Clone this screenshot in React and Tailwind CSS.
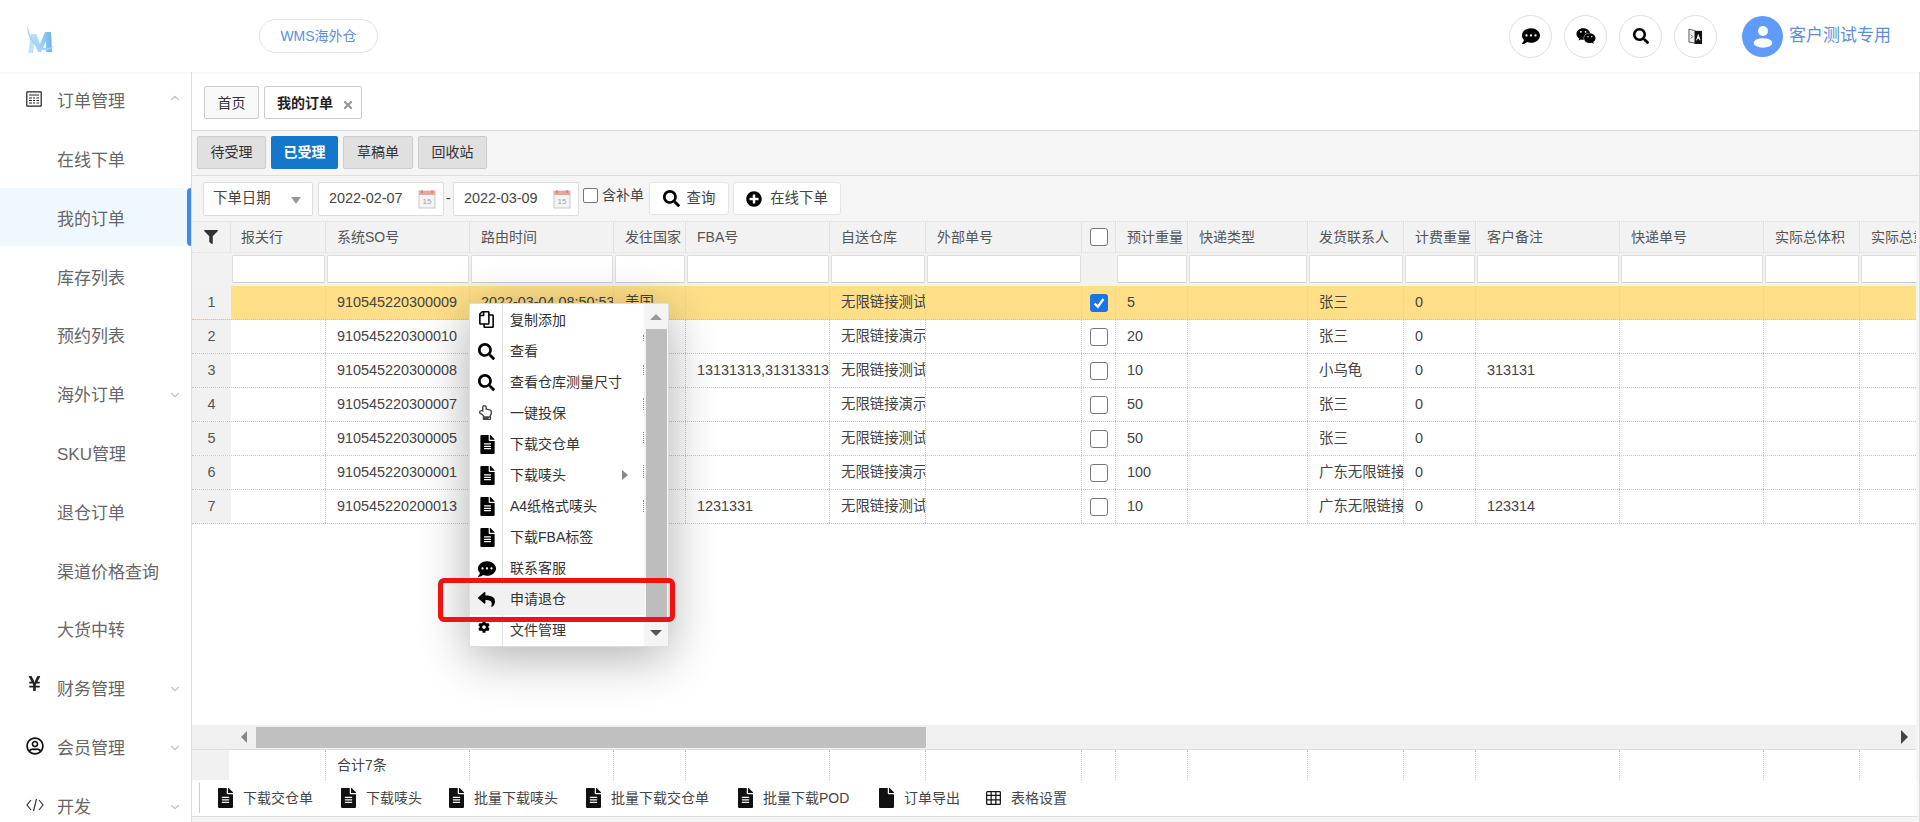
import {
  FaCog,
  FaCommentDots,
  FaFile,
  FaFileAlt,
  FaFilter,
  FaPlusCircle,
  FaRegCopy,
  FaRegHandPointUp,
  FaRegUserCircle,
  FaReply,
  FaSearch,
  FaTimes,
  FaWeixin,
  FaYenSign,
} from "react-icons/fa";
import { FiChevronDown, FiChevronUp } from "react-icons/fi";

const cols = [
  { key: "agent", title: "报关行", w: "w-[95px]", pl: "pl-[10px]" },
  { key: "so", title: "系统SO号", w: "w-[144px]" },
  { key: "time", title: "路由时间", w: "w-[144px]" },
  { key: "country", title: "发往国家", w: "w-[72px]" },
  { key: "fba", title: "FBA号", w: "w-[144px]" },
  { key: "wh", title: "自送仓库", w: "w-[96px]" },
  { key: "ext", title: "外部单号", w: "w-[156px]" },
  { key: "check", title: "", w: "w-[34px]" },
  { key: "weight", title: "预计重量", w: "w-[72px]" },
  { key: "type", title: "快递类型", w: "w-[120px]" },
  { key: "contact", title: "发货联系人", w: "w-[96px]" },
  { key: "bill", title: "计费重量", w: "w-[72px]" },
  { key: "remark", title: "客户备注", w: "w-[144px]" },
  { key: "exno", title: "快递单号", w: "w-[144px]" },
  { key: "vol", title: "实际总体积", w: "w-[96px]" },
  { key: "actual", title: "实际总重量", w: "w-[96px]" },
];

const rows = [
  { so: "910545220300009", time: "2022-03-04 08:50:53", country: "美国", wh: "无限链接测试", weight: "5", contact: "张三", bill: "0", on: true },
  { so: "910545220300010", wh: "无限链接演示", weight: "20", contact: "张三", bill: "0" },
  { so: "910545220300008", fba: "13131313,31313313", wh: "无限链接测试", weight: "10", contact: "小乌龟", bill: "0", remark: "313131" },
  { so: "910545220300007", wh: "无限链接演示", weight: "50", contact: "张三", bill: "0" },
  { so: "910545220300005", wh: "无限链接测试", weight: "50", contact: "张三", bill: "0" },
  { so: "910545220300001", wh: "无限链接演示", weight: "100", contact: "广东无限链接", bill: "0" },
  { so: "910545220200013", fba: "1231331", wh: "无限链接测试", weight: "10", contact: "广东无限链接", bill: "0", remark: "123314" },
];

const nav = [
  { label: "订单管理", icon: "calc", arrow: "up" },
  { label: "在线下单" },
  { label: "我的订单", active: true },
  { label: "库存列表" },
  { label: "预约列表" },
  { label: "海外订单", arrow: "down" },
  { label: "SKU管理" },
  { label: "退仓订单" },
  { label: "渠道价格查询" },
  { label: "大货中转" },
  { label: "财务管理", icon: "yen", arrow: "down" },
  { label: "会员管理", icon: "user", arrow: "down" },
  { label: "开发", icon: "code", arrow: "down" },
];

const menu = [
  { label: "复制添加", icon: <FaRegCopy className="text-[17px] -scale-x-100 -mt-[2px]" /> },
  { label: "查看", icon: <FaSearch className="text-[17px]" /> },
  { label: "查看仓库测量尺寸", icon: <FaSearch className="text-[17px]" /> },
  { label: "一键投保", icon: <FaRegHandPointUp className="text-[15px] text-[#444] -mt-[2px]" /> },
  { label: "下载交仓单", icon: <FaFileAlt className="text-[19px]" /> },
  { label: "下载唛头", icon: <FaFileAlt className="text-[19px]" />, more: true },
  { label: "A4纸格式唛头", icon: <FaFileAlt className="text-[19px]" /> },
  { label: "下载FBA标签", icon: <FaFileAlt className="text-[19px]" /> },
  { label: "联系客服", icon: <FaCommentDots className="text-[18px]" /> },
  { label: "申请退仓", icon: <FaReply className="text-[17px]" />, hover: true },
  { label: "文件管理", icon: <FaCog className="text-[12px] -mt-2" /> },
];

const tools = [
  { label: "下载交仓单", icon: <FaFileAlt />, w: "w-[123px]" },
  { label: "下载唛头", icon: <FaFileAlt />, w: "w-[108px]" },
  { label: "批量下载唛头", icon: <FaFileAlt />, w: "w-[137px]" },
  { label: "批量下载交仓单", icon: <FaFileAlt />, w: "w-[152px]" },
  { label: "批量下载POD", icon: <FaFileAlt />, w: "w-[141px]" },
  { label: "订单导出", icon: <FaFile />, w: "w-[107px]" },
  { label: "表格设置", icon: <TableIcon />, w: "w-[100px]" },
];

// bits of the table's dotted lines that show through the menu
const dots = [
  "top-[31px] h-[6px]",
  "top-[61px] h-[10px]",
  "top-[94px] h-[12px]",
  "top-[128px] h-[11px]",
  "top-[161px] h-[13px]",
  "top-[196px] h-[12px]",
];

function TableIcon() {
  return (
    <svg viewBox="0 0 16 16" className="w-[16px] h-[16px]" fill="none" stroke="#111" strokeWidth="1.3">
      <rect x="0.7" y="1.2" width="14.6" height="13.6" rx="0.8" />
      <path d="M0.7 5.2h14.6M0.7 10h14.6M5.5 1.2v13.6M10.5 1.2v13.6" />
    </svg>
  );
}

function Logo() {
  return (
    <svg viewBox="0 0 30 30" className="w-[30px] h-[30px] ml-[25px] mt-[25px]">
      <defs>
        <linearGradient id="lg" x1="0" y1="0" x2="1" y2="0">
          <stop offset="0" stopColor="#cde8fb" />
          <stop offset="0.55" stopColor="#9cd0f5" />
          <stop offset="1" stopColor="#6fb0ea" />
        </linearGradient>
      </defs>
      <path d="M3 28 L6 9 L11 9 L15 19 L20 7 L26 7 L27 27 L21 27 L21 16 L16 27 L13 27 L9 17 L8 28 Z" fill="url(#lg)" />
      <path d="M3 0 C0 8 8 22 17 25 C21 26 26 25 29 21 C25 23 20 24 16 22 C10 19 3 10 3 0 Z" fill="#a5d2f4" />
    </svg>
  );
}

function NavIcon({ type }) {
  if (type === "calc") {
    return (
      <svg viewBox="0 0 16 16" className="w-[16px] h-[16px]" fill="none" stroke="#222" strokeWidth="1.2">
        <rect x="0.8" y="0.8" width="14.4" height="14.4" rx="0.5" />
        <path d="M3 4h10M3 7h3M7 7h2M10.5 7H13M3 9.5h3M7 9.5h2M10.5 9.5H13M3 12h3M7 12h2M10.5 12H13" />
      </svg>
    );
  }
  if (type === "yen") return <FaYenSign className="text-[17px] text-[#222] -mt-2" />;
  if (type === "user") return <FaRegUserCircle className="text-[18px] text-[#111]" />;
  if (type === "code") {
    return (
      <svg viewBox="0 0 18 14" className="w-[18px] h-[14px]" fill="none" stroke="#333" strokeWidth="1.2">
        <path d="M5 2 L1 7 L5 12 M13 2 L17 7 L13 12 M10.5 1 L7.5 13" />
      </svg>
    );
  }
  return null;
}

function CalendarIcon() {
  return (
    <svg viewBox="0 0 18 20" className="w-[18px] h-[20px] shrink-0">
      <rect x="1" y="2" width="16" height="17" fill="#f4f4f4" stroke="#c9c9c9" />
      <rect x="1" y="2" width="16" height="4" fill="#e8a39a" />
      <path d="M4 1v3M14 1v3" stroke="#c77" strokeWidth="1.2" />
      <text x="9" y="15" fontSize="8" textAnchor="middle" fill="#9aa5ad">15</text>
    </svg>
  );
}

function CheckBox({ on }) {
  if (on) {
    return (
      <span className="w-[18px] h-[18px] rounded-[3px] bg-[#1a73e8] flex items-center justify-center">
        <svg viewBox="0 0 12 12" className="w-[14px] h-[14px]" fill="none" stroke="#fff" strokeWidth="2">
          <path d="M2.2 6.4 L5 9.2 L9.8 2.6" />
        </svg>
      </span>
    );
  }
  return <span className="w-[18px] h-[18px] rounded-[3px] border border-[#767676] bg-white" />;
}

function Sidebar() {
  return (
    <aside className="w-[192px] shrink-0 border-r border-[#ddd] -mt-[2px] text-[17px] text-[#666]">
      {nav.map((item) => (
        <div
          key={item.label}
          className={
            "relative h-[58.8px] flex items-center pl-[57px] pt-[5px] whitespace-nowrap " +
            (item.active ? "bg-[#eff8fe]" : "")
          }
        >
          {item.icon && (
            <span className="absolute left-[26px] top-0 bottom-0 flex items-center">
              <NavIcon type={item.icon} />
            </span>
          )}
          {item.label}
          {item.arrow === "up" && <FiChevronUp className="absolute right-[9px] top-[21px] text-[14px] text-[#c4c4c4]" />}
          {item.arrow === "down" && <FiChevronDown className="absolute right-[9px] top-[24px] text-[14px] text-[#c4c4c4]" />}
          {item.active && <span className="absolute right-0 top-0 bottom-0 w-[4px] rounded-l-[4px] bg-[#3f8be8]" />}
        </div>
      ))}
    </aside>
  );
}

function Header() {
  return (
    <header className="relative z-10 h-[72px] bg-white shadow-[0_1px_3px_rgba(0,0,0,0.06)] flex">
      <div className="w-[259px] shrink-0">
        <Logo />
      </div>
      <div className="mt-[19px] h-[34px] w-[119px] rounded-full border border-[#dde4ee] flex items-center justify-center text-[14px] text-[#5b8fe0]">
        WMS海外仓
      </div>
      <div className="ml-auto flex items-center gap-[12px] text-[16px] text-black pr-[29px]">
        <span className="w-[43px] h-[43px] rounded-full border border-[#e0e0e0] flex items-center justify-center">
          <FaCommentDots className="text-[18px]" />
        </span>
        <span className="w-[43px] h-[43px] rounded-full border border-[#e0e0e0] flex items-center justify-center">
          <FaWeixin className="text-[20px]" />
        </span>
        <span className="w-[43px] h-[43px] rounded-full border border-[#e0e0e0] flex items-center justify-center">
          <FaSearch className="text-[16px]" />
        </span>
        <span className="w-[43px] h-[43px] rounded-full border border-[#e0e0e0] flex items-center justify-center">
          <svg viewBox="0 0 16 18" className="w-[15px] h-[17px]">
            <path d="M1 1 L8 3 V16 L1 15 Z" fill="#eee" stroke="#333" strokeWidth="0.8" />
            <path d="M7 3 H15 V17 H7 Z" fill="#111" />
            <path d="M11 6 L13.4 13 H12.2 L11.7 11.5 H10.2 L9.7 13 H8.6 Z" fill="#fff" />
            <path d="M3 7 L5 9 L3 11" fill="none" stroke="#555" strokeWidth="0.9" />
          </svg>
        </span>
        <span className="ml-[13px] w-[41px] h-[41px] rounded-full bg-[#5f9bf8] flex items-center justify-center">
          <svg viewBox="0 0 24 24" className="w-[30px] h-[30px]" fill="#fff">
            <circle cx="12" cy="8" r="4" />
            <ellipse cx="12" cy="17.5" rx="7.5" ry="3.8" />
          </svg>
        </span>
        <span className="-ml-[6px] text-[17px] text-[#5b8fd8] whitespace-nowrap">客户测试专用</span>
      </div>
    </header>
  );
}

function Tabs() {
  return (
    <div className="h-[59px] bg-white border-b border-[#ddd] flex items-start pt-[14px] pl-[12px] gap-[5px] text-[14px] text-[#333]">
      <div className="h-[33px] w-[55px] border border-[#ccc] rounded-[2px] bg-[#f9f9f9] flex items-center justify-center pt-[2px]">首页</div>
      <div className="h-[33px] w-[98px] border border-[#ccc] rounded-[2px] bg-white flex items-center pl-[12px] pt-[2px] font-semibold text-[#222]">
        我的订单
        <FaTimes className="ml-[9px] mt-[2px] text-[12px] font-normal text-[#999]" />
      </div>
    </div>
  );
}

function StatusTabs() {
  const items = [
    { label: "待受理", w: "w-[69px]" },
    { label: "已受理", w: "w-[67px]", on: true },
    { label: "草稿单", w: "w-[70px]" },
    { label: "回收站", w: "w-[69px]" },
  ];
  return (
    <div className="h-[45px] bg-[#f5f5f5] border-b border-[#ddd] flex items-start pt-[5px] pl-[5px] gap-[5px] text-[14px]">
      {items.map((t) => (
        <div
          key={t.label}
          className={
            "h-[33px] rounded-[2px] flex items-center justify-center " +
            t.w +
            (t.on ? " bg-[#1477cc] text-white font-bold" : " bg-[#e0e0e0] border border-[#ccc] text-[#333]")
          }
        >
          {t.label}
        </div>
      ))}
    </div>
  );
}

function FilterBar() {
  return (
    <div className="h-[45px] bg-[#f5f5f5] flex items-start pt-[6px] pl-[11px] text-[14.4px] text-[#444]">
      <div className="relative w-[110px] h-[34px] bg-white border border-[#ddd] rounded-[2px] flex items-center pl-[9px]">
        下单日期
        <span className="absolute right-[11px] top-[14px] border-x-[5px] border-x-transparent border-t-[7px] border-t-[#999]" />
      </div>
      <div className="ml-[5px] w-[126px] h-[34px] bg-white border border-[#ddd] rounded-[2px] flex items-center justify-between pl-[10px] pr-[7px]">
        2022-02-07
        <CalendarIcon />
      </div>
      <span className="w-[9px] h-[34px] flex items-center justify-center">-</span>
      <div className="w-[126px] h-[34px] bg-white border border-[#ddd] rounded-[2px] flex items-center justify-between pl-[10px] pr-[7px]">
        2022-03-09
        <CalendarIcon />
      </div>
      <div className="ml-[4px] w-[66px] h-[27px] flex items-center gap-[4px]">
        <span className="w-[15px] h-[15px] rounded-[2px] border border-[#767676] bg-white shrink-0" />
        <span className="whitespace-nowrap text-[14px]">含补单</span>
      </div>
      <div className="w-[80px] h-[33px] bg-white border border-[#e4e4e4] rounded-[3px] flex items-center justify-center gap-[7px]">
        <FaSearch className="text-[17px] text-black" />
        查询
      </div>
      <div className="ml-[4px] w-[108px] h-[33px] bg-white border border-[#e4e4e4] rounded-[3px] flex items-center justify-center gap-[8px]">
        <FaPlusCircle className="text-[16px] text-black" />
        在线下单
      </div>
    </div>
  );
}

function Table() {
  return (
    <div className="flex-1 min-h-0 flex flex-col overflow-hidden mr-[3px] bg-white text-[14.4px] text-[#444]">
      <div className="h-[32px] shrink-0 flex bg-[#f2f2f2] border-t border-[#ddd] border-b border-b-[#ddd] border-dotted text-[14px] text-[#555]">
        <div className="w-[39px] shrink-0 flex items-center justify-center border-r border-[#e2e2e2]">
          <FaFilter className="text-[14px] text-[#333]" />
        </div>
        {cols.map((c) => (
          <div key={c.key} className={c.w + " shrink-0 border-r border-[#e2e2e2] flex items-center whitespace-nowrap overflow-hidden " + (c.key === "check" ? "justify-center" : c.pl || "pl-[11px]")}>
            {c.key === "check" ? <CheckBox /> : c.title}
          </div>
        ))}
      </div>
      <div className="h-[33px] shrink-0 flex bg-[#f2f2f2]">
        <div className="w-[39px] shrink-0" />
        {cols.map((c) => (
          <div key={c.key} className={c.w + " shrink-0 px-[1px] pt-[2px]"}>
            {c.key !== "check" && <div className="h-[28px] bg-white border border-[#ddd] border-b-[#ccc] rounded-[2px]" />}
          </div>
        ))}
      </div>
      <div className="flex-1 min-h-0 overflow-hidden">
        {rows.map((row, i) => (
          <div key={row.so} className={"h-[34px] flex border-b border-dotted border-[#c4c4c4] " + (row.on ? "bg-[#ffdf88]" : "")}>
            <div className="w-[39px] shrink-0 bg-[#f1f1f1] flex items-center justify-center text-[#555]">{i + 1}</div>
            {cols.map((c) => (
              <div
                key={c.key}
                className={
                  c.w +
                  " shrink-0 flex items-center whitespace-nowrap overflow-hidden border-r border-dotted " +
                  (c.key === "check" ? "justify-center " : (c.pl || "pl-[11px]") + " ") +
                  (row.on ? "border-[#eed28a]" : "border-[#c4c4c4]")
                }
              >
                {c.key === "check" ? <CheckBox on={row.on} /> : row[c.key]}
              </div>
            ))}
          </div>
        ))}
      </div>
      <div className="h-[25px] shrink-0 flex bg-[#f0f0f0] border-b border-[#ddd] pl-[39px]">
        <div className="w-[25px] shrink-0 flex items-center justify-center">
          <span className="border-y-[6px] border-y-transparent border-r-[6px] border-r-[#888]" />
        </div>
        <div className="w-[670px] shrink-0 h-[21px] mt-[2px] bg-[#c0c0c0]" />
        <div className="flex-1 flex items-center justify-end pr-[8px]">
          <span className="border-y-[7px] border-y-transparent border-l-[7px] border-l-[#444]" />
        </div>
      </div>
      <div className="h-[30px] shrink-0 flex">
        <div className="w-[37px] shrink-0 bg-[#f1f1f1]" />
        <div className="w-[2px] shrink-0" />
        {cols.map((c) => (
          <div key={c.key} className={c.w + " shrink-0 flex items-center pl-[11px] whitespace-nowrap border-r border-dotted border-[#c4c4c4] text-[14px]"}>
            {c.key === "so" ? "合计7条" : ""}
          </div>
        ))}
      </div>
    </div>
  );
}

function Toolbar() {
  return (
    <div className="h-[37px] shrink-0 mb-[5px] mr-[2px] bg-white border-b border-[#ddd] flex items-center pl-[7px] text-[14px] text-[#444]">
      <span className="h-[30px] border-l border-[#ccc]" />
      <div className="flex pl-[18px]">
        {tools.map((t) => (
          <div key={t.label} className={t.w + " flex items-center gap-[10px] whitespace-nowrap"}>
            <span className="w-[15px] flex text-[20px] text-[#111]">{t.icon}</span>
            {t.label}
          </div>
        ))}
      </div>
    </div>
  );
}

function ContextMenu() {
  return (
    <>
      <div className="absolute left-[469px] top-[303px] z-20 w-[200px] h-[344px] bg-white border border-[#ddd] rounded-[2px] shadow-[0_10px_50px_rgba(0,0,0,0.32)] flex text-[14px] text-[#333]">
        <div className="w-[174px] relative py-[1px]">
          <span className="absolute left-[32px] top-0 bottom-0 border-l border-[#e2e2e2]" />
          {menu.map((m) => (
            <div key={m.label} className={"relative h-[31px] flex items-center whitespace-nowrap " + (m.hover ? "bg-[#f1f1f1]" : "")}>
              <span className="w-[40px] shrink-0 flex pl-[8px] text-black">{m.icon}</span>
              {m.label}
              {m.more && <span className="absolute right-[16px] top-[10px] border-y-[5px] border-y-transparent border-l-[6px] border-l-[#888]" />}
            </div>
          ))}
          {dots.map((d) => (
            <span key={d} className={"absolute right-0 border-r border-dotted border-[#888] " + d} />
          ))}
        </div>
        <div className="flex-1 flex flex-col items-center bg-[#f4f4f4]">
          <span className="mt-[10px] border-x-[6px] border-x-transparent border-b-[6px] border-b-[#999]" />
          <div className="mt-[9px] w-[21px] h-[289px] bg-[#bdbdbd]" />
          <span className="mt-[12px] border-x-[6px] border-x-transparent border-t-[6px] border-t-[#555]" />
        </div>
      </div>
      <div className="absolute left-[438px] top-[578px] z-30 w-[237px] h-[44px] border-[5px] border-[#f01212] rounded-[6px]" />
    </>
  );
}

export default function App() {
  return (
    <div className="relative h-[822px] overflow-hidden bg-white flex flex-col [font-family:'Liberation_Sans','Noto_Sans_CJK_SC',sans-serif]">
      <Header />
      <div className="flex-1 min-h-0 flex">
        <Sidebar />
        <main className="flex-1 min-w-0 flex flex-col border-r border-[#ddd] bg-[#f5f5f5]">
          <Tabs />
          <StatusTabs />
          <FilterBar />
          <Table />
          <Toolbar />
        </main>
      </div>
      <ContextMenu />
    </div>
  );
}
